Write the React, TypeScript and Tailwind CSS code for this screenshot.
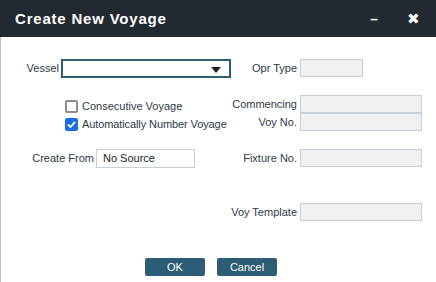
import React from 'react';

const labelCls = "text-[11px] text-[#2d3a46] leading-none whitespace-nowrap";
const roInput = "h-[18px] bg-[#eff0f2] border border-[#c8ced5]";

const RightRow: React.FC<{ label: string; width?: string; className?: string }> = ({ label, width = "w-[122px]", className = "" }) => (
  <div className={`flex items-center ${className}`}>
    <div className="w-[68px] flex justify-end pr-[3px]">
      <span className={labelCls}>{label}</span>
    </div>
    <div className={`${roInput} ${width}`} />
  </div>
);

export default function App() {
  return (
    <div className="w-[436px] h-[282px] bg-white overflow-hidden" style={{ fontFamily: '"Liberation Sans", Arial, sans-serif' }}>
      <div className="h-[37px] bg-[#222930] flex items-center pl-[15px] pr-[16px]">
        <h1 className="text-white font-bold text-[15px] tracking-[0.8px] flex-1 pt-[1px]">Create New Voyage</h1>
        <span className="text-white font-bold text-[14px] mr-[29px] leading-none">–</span>
        <span className="text-white text-[15px] leading-none">✖</span>
      </div>
      <div className="h-[245px] border-l border-[#b8bcc0] flex flex-col">
        <div className="flex flex-1">
          {/* left column */}
          <div className="w-[231px] flex flex-col">
            <div className="flex items-center mt-[22px]">
              <span className={`${labelCls} w-[60px] text-right pr-[2px]`}>Vessel</span>
              <div className="w-[170px] h-[19px] border-2 border-[#2e5c71] relative">
                <svg className="absolute right-[8px] top-[6px]" width="10" height="6" viewBox="0 0 10 6">
                  <path d="M0 0 L10 0 L5 6 Z" fill="#1e2227" />
                </svg>
              </div>
            </div>
            <div className="flex items-center mt-[22px] ml-[64px]">
              <div className="w-[13px] h-[13px] rounded-[2px] border-2 border-[#8a8d92] bg-white" />
              <span className={`${labelCls} ml-[4px]`}>Consecutive Voyage</span>
            </div>
            <div className="flex items-center mt-[5px] ml-[64px]">
              <div className="w-[13px] h-[13px] rounded-[2px] bg-[#1a6fe0] flex items-center justify-center">
                <svg width="11" height="11" viewBox="0 0 11 11">
                  <path d="M2 5.6 L4.5 8 L9 2.8" stroke="white" strokeWidth="1.8" fill="none" />
                </svg>
              </div>
              <span className={`${labelCls} ml-[4px] tracking-[-0.1px]`}>Automatically Number Voyage</span>
            </div>
            <div className="flex items-center mt-[18px]">
              <span className={`${labelCls} w-[95px] text-right pr-[2px]`}>Create From</span>
              <div className="w-[99px] h-[19px] border border-[#c8ced5] bg-white flex items-center pl-[6px] text-[11px] text-[#1b1f24]">No Source</div>
            </div>
          </div>
          {/* right column */}
          <div className="flex flex-col">
            <RightRow label="Opr Type" width="w-[63px]" className="mt-[22px]" />
            <RightRow label="Commencing" className="mt-[18px]" />
            <RightRow label="Voy No." />
            <RightRow label="Fixture No." className="mt-[18px]" />
            <RightRow label="Voy Template" className="mt-[36px]" />
          </div>
        </div>
        <div className="flex gap-[12px] ml-[144px] mb-[6px]">
          <button className="w-[60px] h-[18px] bg-[#2c5d75] rounded-[2px] text-white text-[11px]">OK</button>
          <button className="w-[60px] h-[18px] bg-[#2c5d75] rounded-[2px] text-white text-[11px]">Cancel</button>
        </div>
      </div>
    </div>
  );
}
